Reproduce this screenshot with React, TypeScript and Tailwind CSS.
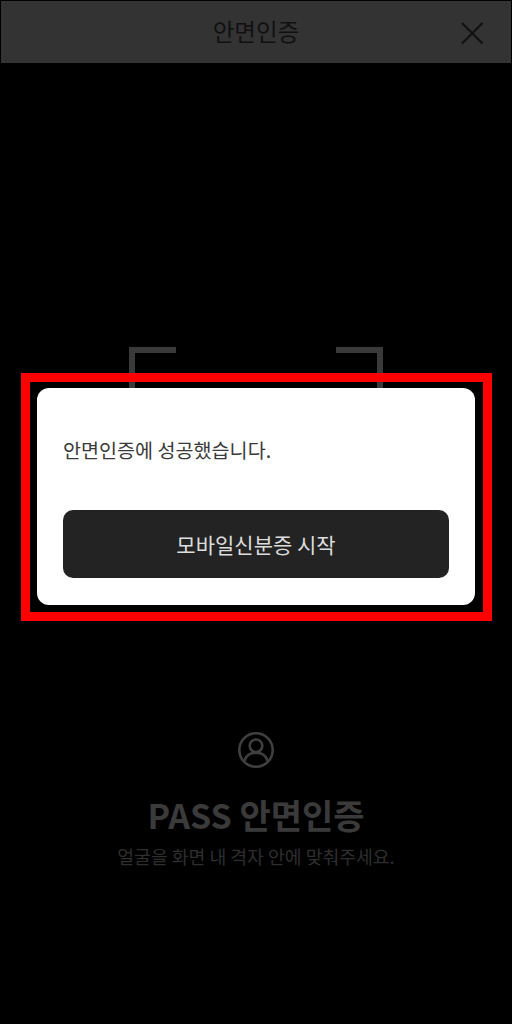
const kr = "font-['Noto_Sans_CJK_KR','Noto_Sans',sans-serif]";

export default function App() {
  return (
    <div className={`relative flex h-[1024px] w-[512px] flex-col overflow-hidden bg-black ${kr}`}>
      {/* Header */}
      <header className="relative mx-px mt-px flex h-[62px] shrink-0 items-center justify-center bg-[#333333]">
        <h1 className="text-[23.5px] font-normal leading-none text-[#111111]">안면인증</h1>
        <button className="absolute right-[27px] top-[20px] text-[#111111]">
          <svg width="24" height="24" viewBox="0 0 24 24" fill="none" stroke="currentColor" strokeWidth="2.2">
            <path d="M2 2 L22.5 22.5 M22.5 2 L2 22.5" />
          </svg>
        </button>
      </header>

      {/* Camera guide */}
      <main className="flex flex-1 flex-col items-center pt-[284px]">
        <div className="flex h-[300px] w-[254px] justify-between">
          <div className="h-[60px] w-[47px] border-l-[6px] border-t-[6px] border-[#3a3a3a]" />
          <div className="h-[60px] w-[47px] border-r-[6px] border-t-[6px] border-[#3a3a3a]" />
        </div>
        <div className="mt-[84px] flex flex-col items-center">
          <svg width="38" height="38" viewBox="0 0 38 38" fill="none" stroke="#3f3f3f" strokeWidth="2.6">
            <circle cx="19" cy="19" r="16.7" />
            <circle cx="19" cy="14.8" r="6.3" />
            <path d="M7.5 30 C9 24.5 13 21.8 19 21.8 C25 21.8 29 24.5 30.5 30" />
          </svg>
          <h2 className="mt-[24px] text-[34px] font-bold leading-[44px] text-[#3a3a3a]">PASS 안면인증</h2>
          <p className="mt-[6px] text-[18.25px] leading-[26px] text-[#2e2e2e]">얼굴을 화면 내 격자 안에 맞춰주세요.</p>
        </div>
      </main>

      {/* Success dialog */}
      <div className="absolute left-[37px] top-[388px] flex h-[217px] w-[438px] flex-col rounded-[12px] bg-white px-[26px] pb-[27px]">
        <p className="mt-[48px] text-[19.6px] leading-[28px] text-[#3a3a3a]">안면인증에 성공했습니다.</p>
        <button className="mt-auto h-[68px] rounded-[10px] bg-[#232323] pt-[2px] text-[21px] text-[#dddddd]">모바일신분증 시작</button>
      </div>

      {/* Red highlight */}
      <div className="pointer-events-none absolute left-[21px] top-[373px] h-[248px] w-[471px] border-[9px] border-[#ff0000]" />
    </div>
  );
}
